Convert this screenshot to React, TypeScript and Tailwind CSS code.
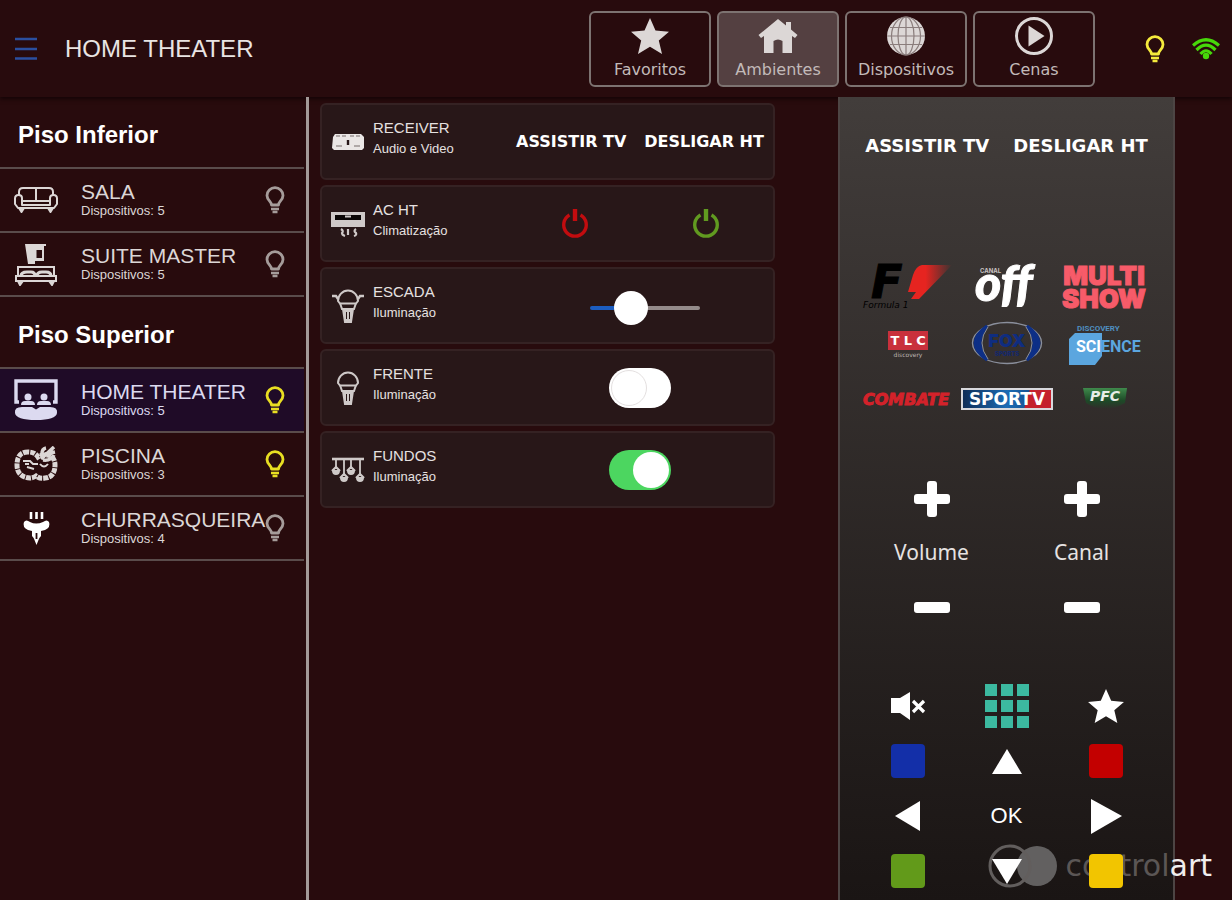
import React, { useState } from 'react';

/* ---------- Icons ---------- */

const StarIcon: React.FC<{ className?: string }> = ({ className }) => (
  <svg viewBox="0 0 38 36" className={className ?? 'w-[38px] h-9'} fill="currentColor">
    <path d="M19 0 L24.500 12.500 L38 13.800 L27.800 22.500 L31 36 L19 28.800 L7 36 L10.200 22.500 L0 13.800 L13.500 12.500 Z" />
  </svg>
);

const HomeIcon = () => (
  <svg viewBox="0 0 40 36" className="w-10 h-9" fill="currentColor">
    <path d="M20 1 L28 7.500 V4 H33 V11.500 L39.500 17 L37 20 L34 18 V35 H24.500 V23 Q20 20 15.500 23 V35 H6 V18 L3 20 L0.500 17 Z" />
  </svg>
);

const BulbIcon: React.FC<{ className?: string }> = ({ className }) => (
  <svg viewBox="0 0 20 28" className={`w-5 h-7 shrink-0 ${className ?? ''}`} fill="none" stroke="currentColor">
    <path d="M6.500 19 C6.500 15.500 2 14 2 9.500 A8 7.800 0 0 1 18 9.500 C18 14 13.500 15.500 13.500 19 Z" strokeWidth="2.800" strokeLinejoin="round" />
    <path d="M6 23 H14 M7.500 26 H12.500" strokeWidth="2.400" />
  </svg>
);

const WifiIcon = () => (
  <svg viewBox="0 0 28 22" className="w-7 h-[22px]" fill="none" stroke="currentColor" strokeWidth="3.200">
    <path d="M1 7.500 Q14 -4 27 7.500" />
    <path d="M4.500 12 Q14 2.500 23.500 12" />
    <path d="M8.500 16 Q14 9.500 19.500 16" />
    <circle cx="14" cy="18" r="3.200" fill="currentColor" stroke="none" />
  </svg>
);

const GlobeIcon = () => (
  <svg viewBox="0 0 40 40" className="size-10">
    <circle cx="20" cy="20" r="19" fill="currentColor" />
    <g fill="none" stroke="#8a7d7c" strokeWidth="1.200">
      <path d="M20 1 V39 M1 20 H39 M4 11.500 H36 M4 28.500 H36" />
      <ellipse cx="20" cy="20" rx="8" ry="19" />
      <ellipse cx="20" cy="20" rx="14.500" ry="19" />
    </g>
  </svg>
);

const PlayCircleIcon = () => (
  <svg viewBox="0 0 40 40" className="size-10">
    <circle cx="20" cy="20" r="17.500" fill="none" stroke="currentColor" strokeWidth="3" />
    <path d="M14.500 9.500 L30.500 20 L14.500 30.500 Z" fill="currentColor" />
  </svg>
);

const SofaIcon = () => (
  <svg viewBox="0 0 44 40" className="w-11 h-10" fill="none" stroke="currentColor" strokeWidth="2" strokeLinejoin="round">
    <path d="M5 15 V12 Q5 8 9 8 H35 Q39 8 39 12 V15" />
    <path d="M22 8 V21 M8 21 H36" />
    <path d="M8 25 V18 Q8 15 4.500 15 Q1 15 1 18.500 V24 L4 28 H40 L43 24 V18.500 Q43 15 39.500 15 Q36 15 36 18 V25 Z" />
    <path d="M5 28 L7.500 32 L10 28 M34 28 L36.500 32 L39 28" fill="currentColor" />
  </svg>
);

const BedIcon = () => (
  <svg viewBox="0 0 44 44" className="size-11" fill="none" stroke="currentColor" strokeWidth="2">
    <path d="M11 2 H32 V4 H30 V19 H21 V22 H14 Z" fill="currentColor" stroke="none" />
    <path d="M22.500 8 H28 V16 H22.500 Z" fill="#280b0d" stroke="none" />
    <path d="M4 34 V25 H40 V34" />
    <path d="M7 34 Q7 30 13 30 H17 Q21 30 21 34 M23 34 Q23 30 28 30 H32 Q37 30 37 34" strokeWidth="3" />
    <path d="M2 34 H42 V39 H2 Z" />
    <path d="M4 39 L6 43 L9 39 M35 39 L38 43 L40 39" fill="currentColor" />
  </svg>
);

const TheaterIcon = () => (
  <svg viewBox="0 0 44 42" className="w-11 h-[42px]">
    <path d="M5 23 H2 V2 H42 V23 H39" fill="none" stroke="currentColor" strokeWidth="3.400" />
    <g fill="currentColor">
      <circle cx="14" cy="18" r="3.500" />
      <circle cx="30" cy="18" r="3.500" />
      <path d="M7 26 Q7 22 11 22 H17 Q21 22 21 26 Z M23 26 Q23 22 27 22 H33 Q37 22 37 26 Z" />
      <path d="M1 34 Q0 28 8 28 H18 L22 30.500 L26 28 H36 Q44 28 43 34 Q42 41 22 41 Q2 41 1 34 Z" />
    </g>
  </svg>
);

const PoolIcon = () => (
  <svg viewBox="0 0 44 36" className="w-11 h-9" fill="none" stroke="currentColor">
    <path d="M14 6 Q3 6 3 19 Q3 31 16 32 Q19 32 22 30 Q26 33 31 32 Q41 31 41 19 Q41 9 31 9 Q27 9 24 11 Q21 6 14 6 Z" strokeWidth="5" strokeDasharray="5 1" />
    <path d="M9 15 h7 l3 3 h5 M13 21 l7 2 M26 18 q4 5 8 0 M11 18 h4" strokeWidth="2" />
    <path d="M27 13 L40 1 M28 11 Q27 3 32 2 M29 14 Q37 15 40 9 M31 8 L41 6" strokeWidth="3.500" />
  </svg>
);

const BarbecueIcon = () => (
  <svg viewBox="0 0 44 40" className="w-11 h-10 text-white">
    <path d="M17 4 V11 M22.500 4 V11 M28 4 V11" fill="none" stroke="currentColor" strokeWidth="2.600" />
    <path d="M10 14 Q12 11 16 14 Q22 17 29 14 Q33 11 35 14 Q37 19 31 22 L27 23 V28 Q25 30 24.500 32 L22.500 37 L20.500 32 Q20 30 18 28 V23 L14 22 Q8 19 10 14 Z" fill="currentColor" />
    <path d="M22.500 25 V31" stroke="#280b0d" strokeWidth="1.800" />
  </svg>
);

const ReceiverIcon = () => (
  <svg viewBox="0 0 36 20" className="w-9 h-5">
    <path d="M3 5 L5 2 H31 L34 5 V16 L32 18 H4 L2 16 Z" fill="#eae6e5" />
    <path d="M6 4 H10 M12 4 H16 M20 4 H24 M26 4 H30 M6 14 H12 M24 14 H30" stroke="#9c9493" strokeWidth="1.400" />
    <path d="M18 8 V13" stroke="#281718" strokeWidth="2.400" />
  </svg>
);

const AirIcon = () => (
  <svg viewBox="0 0 36 28" className="w-9 h-7" fill="none" stroke="currentColor">
    <path d="M2 3 H34 V16 H2 Z" fill="currentColor" strokeWidth="2" />
    <path d="M5 7.500 H31" stroke="#0b0606" strokeWidth="5" />
    <path d="M15 6.500 H21" strokeWidth="2" />
    <path d="M11 19 q3 2 1 4 q0 2 3 3 M18 19 v6 M26 19 q-3 2 0 4 q1 2 -2 3" strokeWidth="2.200" />
  </svg>
);

const LampIcon: React.FC<{ rays?: boolean }> = ({ rays }) => (
  <svg viewBox="0 0 36 36" className="size-9" fill="none" stroke="currentColor" strokeWidth="2">
    <path d="M8 13 A10 10.500 0 0 1 28 13 L26 15.500 H10 Z" />
    <path d="M10 15 L12 21 H24 L26 15" />
    <path d="M13 21 L15 34 H21 L23 21 Z" fill="currentColor" />
    <path d="M16.500 24 V31 M19.500 24 V31" stroke="#281718" strokeWidth="1" />
    {rays && <path d="M2 8 H6 L8 11 M34 8 H30 L28 11" strokeWidth="2.400" />}
  </svg>
);

const PendantsIcon = () => (
  <svg viewBox="0 0 36 28" className="w-9 h-7" fill="none" stroke="currentColor" strokeWidth="1.800">
    <path d="M2 3 H34" strokeWidth="2.600" />
    <path d="M6 3 V12 M14 3 V19 M21 3 V12 M30 3 V19" />
    <path d="M2 15 L6 11 L10 15 M10 22 L14 18 L18 22 M17 15 L21 11 L25 15 M26 22 L30 18 L34 22" strokeWidth="2.200" />
    <path d="M3 15 a3 3 0 0 0 6 0 Z M11 22 a3 3 0 0 0 6 0 Z M18 15 a3 3 0 0 0 6 0 Z M27 22 a3 3 0 0 0 6 0 Z" fill="currentColor" />
  </svg>
);

const PowerIcon = () => (
  <svg viewBox="0 0 30 32" className="w-[30px] h-8" fill="none" stroke="currentColor" strokeWidth="3.400">
    <path d="M9.500 7 A11.300 11.300 0 1 0 20.500 7" />
    <path d="M15 1 V13" strokeWidth="4.400" />
  </svg>
);

const MuteIcon = () => (
  <svg viewBox="0 0 36 30" className="w-9 h-[30px]">
    <path d="M1 7 H10 L20 1 V29 L10 22 H1 Z" fill="currentColor" />
    <path d="M23 10 L34 21 M34 10 L23 21" stroke="currentColor" strokeWidth="3.200" />
  </svg>
);

const KeypadIcon = () => (
  <svg viewBox="0 0 44 44" className="size-11" fill="#3cb9a0">
    {[0, 16, 32].map((y) => [0, 16, 32].map((x) => <rect key={`${x}-${y}`} x={x} y={y} width="12" height="12" />))}
  </svg>
);

const ARROWS = {
  up: 'M18 6 L33 31 H3 Z',
  down: 'M3 6 H33 L18 31 Z',
  left: 'M5 18 L30 3 V33 Z',
  right: 'M3 1 L34 18 L3 36 Z',
};

const ArrowIcon: React.FC<{ dir: keyof typeof ARROWS }> = ({ dir }) => (
  <svg viewBox="0 0 36 36" className="size-9">
    <path d={ARROWS[dir]} fill="white" />
  </svg>
);

/* ---------- Channel logos ---------- */

const HEAVY = 'Inter, "Liberation Sans", sans-serif';
const WIDE = '"DejaVu Sans", sans-serif';
const NARROW = 'Roboto, "Liberation Sans", sans-serif';

const Formula1Logo = () => (
  <svg viewBox="0 0 92 52" className="w-[92px] h-[52px] overflow-visible">
    <defs>
      <linearGradient id="f1-red" x1="0" x2="1">
        <stop offset="0.400" stopColor="#e62420" />
        <stop offset="1" stopColor="#e62420" stopOpacity="0" />
      </linearGradient>
    </defs>
    <text x="9" y="37" fontFamily={WIDE} fontSize="46" fontWeight="700" fontStyle="oblique" fill="#000" stroke="#000">F</text>
    <path d="M60 4 H90 L57 38 H49 L54 31 H46 L51 14 Q54 5 60 4 Z" fill="url(#f1-red)" />
    <text x="1" y="47" fontFamily={WIDE} fontSize="9" fontStyle="oblique" fill="#000">Formula 1</text>
  </svg>
);

const OffLogo = () => (
  <svg viewBox="0 0 72 56" className="w-[72px] h-14 overflow-visible" fill="white">
    <text x="9" y="14" fontFamily={HEAVY} fontSize="6" fontWeight="700" fill="#c9c4c3">CANAL</text>
    <text x="4" y="42" fontFamily="Lato, sans-serif" fontSize="50" fontWeight="900" fontStyle="italic" stroke="white">off</text>
  </svg>
);

const MultishowLogo = () => (
  <svg viewBox="0 0 90 52" className="w-[90px] h-[52px]" fill="#f75b69" stroke="#f75b69" fontFamily={HEAVY} fontSize="26" fontWeight="900" textAnchor="middle">
    <text x="43" y="24">MULTI</text>
    <text x="43" y="47">SHOW</text>
  </svg>
);

const TlcLogo = () => (
  <svg viewBox="0 0 42 32" className="w-[42px] h-8">
    <rect x="1" y="4" width="40" height="19" fill="#c9303c" />
    <g fill="white" fontFamily={WIDE} fontSize="13" fontWeight="700" textAnchor="middle">
      <text x="8" y="18">T</text>
      <text x="21" y="18">L</text>
      <text x="34" y="18">C</text>
    </g>
    <text x="21" y="30" fontFamily={WIDE} fontSize="6" fill="#bdb5b3" textAnchor="middle">discovery</text>
  </svg>
);

const FoxSportsLogo = () => (
  <svg viewBox="0 0 72 44" className="w-[72px] h-11">
    <ellipse cx="36" cy="22" rx="34.500" ry="20.500" fill="none" stroke="#8a8f9c" strokeWidth="1.400" />
    <path d="M16 5 Q-8 22 16 39 Q2 22 16 5 Z M56 5 Q80 22 56 39 Q70 22 56 5 Z" fill="#0d2f86" stroke="#0d2f86" strokeWidth="3" />
    <path d="M17 6 Q5 22 17 38 M55 6 Q67 22 55 38" fill="none" stroke="#8a8f9c" strokeWidth="1" />
    <text x="36" y="26" fontFamily={HEAVY} fontSize="18" fontWeight="900" fill="#0f2d80" textAnchor="middle">FOX</text>
    <text x="36" y="35" fontFamily={HEAVY} fontSize="6" fontWeight="900" fill="#16296a" textAnchor="middle">SPORTS</text>
  </svg>
);

const ScienceLogo = () => (
  <svg viewBox="0 0 76 48" className="w-[76px] h-12">
    <path d="M1 20 L7 14 H34 V37 L27 46 H1 Z" fill="#5ba6df" />
    <text x="9" y="12" fontFamily={NARROW} fontSize="8" fontWeight="700" fill="#4f8fc0">DISCOVERY</text>
    <text x="8" y="33" fontFamily={NARROW} fontSize="16" fontWeight="700" fill="white">
      SCI<tspan fill="#5ba6df">ENCE</tspan>
    </text>
  </svg>
);

const CombateLogo = () => (
  <svg viewBox="0 0 92 24" className="w-[92px] h-6">
    <text x="44" y="18" fontFamily={WIDE} fontSize="16" fontWeight="700" fontStyle="oblique" fill="#d3222a" stroke="#d3222a" textAnchor="middle">COMBATE</text>
  </svg>
);

const SporTvLogo = () => (
  <svg viewBox="0 0 92 24" className="w-[92px] h-6">
    <defs>
      <linearGradient id="sportv-blue" x1="0" x2="1">
        <stop offset="0" stopColor="#0f2c55" />
        <stop offset="0.500" stopColor="#1c6bb4" />
        <stop offset="1" stopColor="#123a70" />
      </linearGradient>
    </defs>
    <rect x="1" y="2" width="90" height="20" fill="url(#sportv-blue)" />
    <path d="M69 2 H91 V22 H63 Z" fill="#c4202c" />
    <rect x="1" y="2" width="90" height="20" fill="none" stroke="#d8d8dc" strokeWidth="2" />
    <text x="46" y="18" fontFamily={WIDE} fontSize="17" fontWeight="700" fill="white" textAnchor="middle">SPORTV</text>
  </svg>
);

const PfcLogo = () => (
  <svg viewBox="0 0 46 28" className="w-[46px] h-7">
    <defs>
      <linearGradient id="pfc-green" x1="0" x2="0" y1="0" y2="1">
        <stop offset="0" stopColor="#3f8a4c" />
        <stop offset="0.600" stopColor="#1d4a27" />
        <stop offset="1" stopColor="#1d4a27" stopOpacity="0" />
      </linearGradient>
    </defs>
    <path d="M0 3 H44 L42 18 Q22 30 3 18 Z" fill="url(#pfc-green)" />
    <text x="22" y="16" fontFamily={WIDE} fontSize="14" fontWeight="700" fontStyle="oblique" fill="#e8eee8" textAnchor="middle">PFC</text>
  </svg>
);

/* ---------- Data ---------- */

const TABS = [
  { id: 'favoritos', label: 'Favoritos', icon: <StarIcon /> },
  { id: 'ambientes', label: 'Ambientes', icon: <HomeIcon /> },
  { id: 'dispositivos', label: 'Dispositivos', icon: <GlobeIcon /> },
  { id: 'cenas', label: 'Cenas', icon: <PlayCircleIcon /> },
];

const FLOORS = [
  {
    name: 'Piso Inferior',
    rooms: [
      { name: 'SALA', devices: 5, lit: false, icon: <SofaIcon /> },
      { name: 'SUITE MASTER', devices: 5, lit: false, icon: <BedIcon /> },
    ],
  },
  {
    name: 'Piso Superior',
    rooms: [
      { name: 'HOME THEATER', devices: 5, lit: true, icon: <TheaterIcon /> },
      { name: 'PISCINA', devices: 3, lit: true, icon: <PoolIcon /> },
      { name: 'CHURRASQUEIRA', devices: 4, lit: false, icon: <BarbecueIcon /> },
    ],
  },
];

const CHANNELS = [
  { name: 'Formula 1', logo: <Formula1Logo /> },
  { name: 'Canal Off', logo: <OffLogo /> },
  { name: 'Multishow', logo: <MultishowLogo /> },
  { name: 'TLC', logo: <TlcLogo /> },
  { name: 'Fox Sports', logo: <FoxSportsLogo /> },
  { name: 'Discovery Science', logo: <ScienceLogo /> },
  { name: 'Combate', logo: <CombateLogo /> },
  { name: 'SporTV', logo: <SporTvLogo /> },
  { name: 'PFC', logo: <PfcLogo /> },
];

const REMOTE_KEYS = [
  { name: 'Mudo', face: <MuteIcon /> },
  { name: 'Teclado', face: <KeypadIcon /> },
  { name: 'Favorito', face: <StarIcon className="w-9 h-[34px]" /> },
  { name: 'Azul', face: <span className="size-[34px] rounded-sm bg-[#132fa8]" /> },
  { name: 'Cima', face: <ArrowIcon dir="up" /> },
  { name: 'Vermelho', face: <span className="size-[34px] rounded-sm bg-[#c30000]" /> },
  { name: 'Esquerda', face: <ArrowIcon dir="left" /> },
  { name: 'OK', face: <span className="text-[22px]">OK</span> },
  { name: 'Direita', face: <ArrowIcon dir="right" /> },
  { name: 'Verde', face: <span className="size-[34px] rounded-sm bg-[#629a1a]" /> },
  { name: 'Baixo', face: <ArrowIcon dir="down" /> },
  { name: 'Amarelo', face: <span className="size-[34px] rounded-sm bg-[#f2c500]" /> },
];

/* ---------- Controls ---------- */

const Dimmer: React.FC<{ label: string }> = ({ label }) => {
  const [value, setValue] = useState(32);
  return (
    <input
      type="range"
      aria-label={label}
      value={value}
      onChange={(e) => setValue(Number(e.target.value))}
      className="w-[110px] h-1 appearance-none cursor-pointer rounded-sm [&::-webkit-slider-thumb]:appearance-none [&::-webkit-slider-thumb]:size-[34px] [&::-webkit-slider-thumb]:rounded-full [&::-webkit-slider-thumb]:bg-white"
      style={{ background: `linear-gradient(to right, #1c5dc0 ${value}%, #948b8a ${value}%)` }}
    />
  );
};

const Toggle: React.FC<{ label: string; initial: boolean }> = ({ label, initial }) => {
  const [on, setOn] = useState(initial);
  return (
    <label className="cursor-pointer">
      <input type="checkbox" role="switch" aria-label={label} checked={on} onChange={() => setOn(!on)} className="sr-only" />
      <span className={`flex items-center w-[62px] h-10 p-0.5 rounded-full transition-colors ${on ? 'justify-end bg-[#4cd660]' : 'justify-start bg-white'}`}>
        <span className={`size-9 rounded-full bg-white ${on ? '' : 'border border-[#e4e0e0]'}`} />
      </span>
    </label>
  );
};

interface DeviceCardProps {
  name: string;
  kind: string;
  icon: React.ReactNode;
  children: React.ReactNode;
}

const DeviceCard: React.FC<DeviceCardProps> = ({ name, kind, icon, children }) => (
  <section className="flex h-[77px] pl-2 pr-0.5 rounded-md bg-[#281718] border-2 border-[#352223]">
    <div className="w-9 mr-[7px] flex items-center justify-center text-[#cfc9c8]">{icon}</div>
    <div className="flex-1 pt-3 text-[#e6e1e0]">
      <h3 className="text-[15px] leading-[22px]">{name}</h3>
      <p className="text-[13px] leading-5">{kind}</p>
    </div>
    <div className="w-[262px] flex items-center justify-center">{children}</div>
  </section>
);

const Stepper: React.FC<{ label: string }> = ({ label }) => (
  <div className="grid grid-rows-3 justify-items-center text-white">
    <button aria-label={`${label} mais`} className="h-[54px] flex items-center">
      <svg viewBox="0 0 36 36" className="size-9" fill="currentColor">
        <rect x="13" y="0" width="10" height="36" rx="3" />
        <rect x="0" y="13" width="36" height="10" rx="3" />
      </svg>
    </button>
    <span className="h-[54px] flex items-center font-['Noto_Sans',sans-serif] text-[21px] text-[#e6e2e1]">{label}</span>
    <button aria-label={`${label} menos`} className="h-[54px] flex items-center">
      <svg viewBox="0 0 36 36" className="size-9" fill="currentColor">
        <rect x="0" y="13" width="36" height="11" rx="3" />
      </svg>
    </button>
  </div>
);

/* ---------- Page ---------- */

export default function App() {
  const [tab, setTab] = useState('ambientes');
  const [room, setRoom] = useState('HOME THEATER');

  return (
    <div className="relative min-h-screen flex flex-col bg-[#280b0d] font-['Liberation_Sans',Arial,sans-serif] text-white">
      {/* Header */}
      <header className="flex items-center h-[97px] pl-[15px] pr-3 shadow-[0_2px_4px_#140506]">
        <button aria-label="Menu" className="text-[#2b4f9f]">
          <svg viewBox="0 0 22 24" className="w-[22px] h-6" stroke="currentColor" strokeWidth="2.600">
            <path d="M0 2 H22 M0 12 H22 M0 21.500 H22" />
          </svg>
        </button>
        <h1 className="ml-7 text-2xl text-[#e9e4e3]">HOME THEATER</h1>
        <nav className="ml-auto flex gap-[6px]">
          {TABS.map(({ id, label, icon }) => (
            <button
              key={id}
              onClick={() => setTab(id)}
              className={`w-[122px] h-[76px] flex flex-col items-center rounded-md border-2 border-[#7d7371] text-[#dcd7d6] ${
                tab === id ? 'bg-[#544041]' : ''
              }`}
            >
              <span className="h-[46px] flex items-center">{icon}</span>
              <span className="font-['DejaVu_Sans',sans-serif] text-base leading-[22px] text-[#c2bab9]">{label}</span>
            </button>
          ))}
        </nav>
        <BulbIcon className="ml-[50px] text-[#f4ea3c]" />
        <span className="ml-[27px] text-[#47d80a]">
          <WifiIcon />
        </span>
      </header>

      <div className="flex-1 flex">
        {/* Rooms */}
        <aside className="w-[309px] shrink-0 pr-[2px] border-r-[3px] border-[#a39a98]">
          {FLOORS.map((floor) => (
            <section key={floor.name}>
              <h2 className="h-18 pl-[18px] pt-1.5 flex items-center border-b-2 border-[#5a4c4b] text-2xl font-bold">{floor.name}</h2>
              {floor.rooms.map(({ name, devices, lit, icon }) => {
                const active = name === room;
                return (
                  <button
                    key={name}
                    onClick={() => setRoom(name)}
                    className={`w-full h-16 pl-[14px] pr-[19px] flex items-center text-left border-b-2 border-[#5a4c4b] ${
                      active ? 'bg-[#1f0b27] text-[#dcdaf0]' : 'text-[#dcd7d6]'
                    }`}
                  >
                    <span className="w-11 shrink-0">{icon}</span>
                    <span className="flex-1 min-w-0 ml-[23px] flex flex-col whitespace-nowrap">
                      <span className="text-[21px] leading-[22px]">{name}</span>
                      <span className="text-[13px] leading-4">Dispositivos: {devices}</span>
                    </span>
                    <BulbIcon className={lit ? 'text-[#e8de22]' : 'text-[#a59c9a]'} />
                  </button>
                );
              })}
            </section>
          ))}
        </aside>

        {/* Devices */}
        <main className="flex-1 flex flex-col gap-[5px] pt-1.5 pl-[11px] pr-[63px]">
          <DeviceCard name="RECEIVER" kind="Audio e Video" icon={<ReceiverIcon />}>
            <div className="flex gap-[18px] whitespace-nowrap font-['DejaVu_Sans',sans-serif] font-bold text-base">
              <button>ASSISTIR TV</button>
              <button>DESLIGAR HT</button>
            </div>
          </DeviceCard>
          <DeviceCard name="AC HT" kind="Climatização" icon={<AirIcon />}>
            <div className="w-full grid grid-cols-2 justify-items-center">
              <button aria-label="Desligar AC" className="text-[#c20c0f]">
                <PowerIcon />
              </button>
              <button aria-label="Ligar AC" className="text-[#619a20]">
                <PowerIcon />
              </button>
            </div>
          </DeviceCard>
          <DeviceCard name="ESCADA" kind="Iluminação" icon={<LampIcon rays />}>
            <div className="flex items-center pt-1 pl-[10px]">
              <Dimmer label="Escada" />
            </div>
          </DeviceCard>
          <DeviceCard name="FRENTE" kind="Iluminação" icon={<LampIcon />}>
            <Toggle label="Frente" initial={false} />
          </DeviceCard>
          <DeviceCard name="FUNDOS" kind="Iluminação" icon={<PendantsIcon />}>
            <Toggle label="Fundos" initial />
          </DeviceCard>
        </main>

        {/* Remote control */}
        <section className="w-[337px] shrink-0 mr-[57px] flex flex-col items-center border-x-2 border-[#4d4544] bg-linear-to-b from-[#423d3b] to-[#1a1514]">
          <div className="h-[98px] flex items-center gap-6 whitespace-nowrap font-['DejaVu_Sans',sans-serif] font-bold text-lg">
            <button>ASSISTIR TV</button>
            <button>DESLIGAR HT</button>
          </div>

          <div className="mt-16 w-[297px] grid grid-cols-3">
            {CHANNELS.map(({ name, logo }) => (
              <button key={name} aria-label={name} className="h-14 flex items-center justify-center">
                {logo}
              </button>
            ))}
          </div>

          <div className="mt-[45px] w-[300px] grid grid-cols-2">
            <Stepper label="Volume" />
            <Stepper label="Canal" />
          </div>

          <div className="mt-11 w-[297px] grid grid-cols-3 z-20">
            {REMOTE_KEYS.map(({ name, face }) => (
              <button key={name} aria-label={name} className="h-[55px] flex items-center justify-center">
                {face}
              </button>
            ))}
          </div>
        </section>
      </div>

      {/* Brand mark, sits between the panel and its keys */}
      <div className="absolute right-5 bottom-3 z-10 flex items-center gap-2 pointer-events-none">
        <svg viewBox="0 0 70 44" className="w-[70px] h-11">
          <circle cx="49" cy="22" r="20" fill="#626060" />
          <circle cx="22" cy="22" r="20" fill="none" stroke="#625e5d" strokeWidth="3" />
        </svg>
        <span className="font-['DejaVu_Sans',sans-serif] text-3xl leading-10 text-[#5b5655]">
          control<span className="text-[#f0eded]">art</span>
        </span>
      </div>
    </div>
  );
}
